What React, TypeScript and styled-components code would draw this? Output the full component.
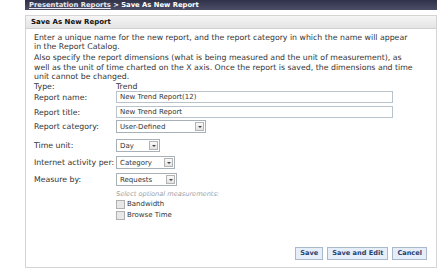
import React from 'react';
import styled, { createGlobalStyle } from 'styled-components';

const GlobalStyle = createGlobalStyle`
  html, body {
    margin: 0;
    padding: 0;
    background: #ffffff;
    font-family: "DejaVu Sans", Verdana, sans-serif;
  }
`;

const Page = styled.div`
  width: 444px;
  height: 279px;
  padding-left: 25px;
  padding-right: 7px;
  box-sizing: border-box;
  display: flex;
  flex-direction: column;
`;

const Crumbs = styled.div`
  height: 10px;
  background: linear-gradient(#2f3248, #4b4e66);
  color: #ffffff;
  font-size: 6.8px;
  font-weight: bold;
  line-height: 10px;
  padding-left: 4px;
  white-space: nowrap;
  overflow: hidden;
`;

const CrumbLink = styled.span`
  text-decoration: underline;
  color: #e8e8f0;
`;

const Panel = styled.div`
  margin-top: 5px;
  border: 1px solid #d4d4d4;
  height: 253px;
  box-sizing: border-box;
  display: flex;
  flex-direction: column;
`;

const PanelTitle = styled.div`
  height: 12px;
  line-height: 12px;
  padding-left: 5px;
  background: linear-gradient(#f5f5f5, #e4e4e4);
  border-bottom: 1px solid #d0d0d0;
  font-size: 7px;
  font-weight: bold;
  color: #111;
`;

const Body = styled.div`
  padding: 4px 9px 0 8px;
  font-size: 7.8px;
  color: #333;
  display: flex;
  flex-direction: column;
  flex: 1;
`;

const Para = styled.p`
  margin: 0;
  line-height: 9.2px;
  white-space: nowrap;
  & + & {
    margin-top: 2px;
  }
`;

const Form = styled.div`
  margin-top: 1px;
  display: flex;
  flex-direction: column;
`;

const Row = styled.div<{ $h: number; $mt?: number }>`
  display: flex;
  align-items: center;
  height: ${p => p.$h}px;
  margin-top: ${p => p.$mt ?? 0}px;
`;

const Label = styled.div`
  width: 82px;
  flex: none;
  white-space: nowrap;
  color: #333;
`;

const TextInput = styled.div`
  width: 277px;
  height: 12px;
  box-sizing: border-box;
  border: 1px solid #b8c3cc;
  padding-left: 3px;
  line-height: 10px;
  font-size: 7px;
`;

const Select = styled.div<{ $w: number }>`
  width: ${p => p.$w}px;
  height: 13px;
  box-sizing: border-box;
  border: 1px solid #a8b0b8;
  display: flex;
  align-items: center;
  justify-content: space-between;
  padding-left: 3px;
  font-size: 7px;
`;

const Arrow = styled.span`
  width: 9px;
  height: 9px;
  margin-right: 1px;
  box-sizing: border-box;
  border: 1px solid #b4b4b4;
  background: linear-gradient(#fafafa, #e2e2e2);
  display: flex;
  align-items: center;
  justify-content: center;
  &::after {
    content: '';
    border-left: 2px solid transparent;
    border-right: 2px solid transparent;
    border-top: 2px solid #444;
  }
`;

const Hint = styled.div`
  font-style: italic;
  font-size: 6.6px;
  color: #a0a0a0;
`;

const CheckLabel = styled.label`
  display: flex;
  align-items: center;
  gap: 2px;
  font-size: 7px;
  color: #333;
`;

const Box = styled.span`
  width: 7px;
  height: 7px;
  border: 1px solid #b0b0b0;
  background: #e8e8e8;
`;

const Buttons = styled.div`
  margin-top: auto;
  margin-bottom: 7px;
  display: flex;
  justify-content: flex-end;
  gap: 4px;
`;

const Button = styled.button`
  height: 13px;
  padding: 0 4px;
  border: 1px solid #aab8cc;
  background: #e6eefa;
  color: #29436e;
  font-family: "DejaVu Sans", Verdana, sans-serif;
  font-size: 6.6px;
  font-weight: bold;
  line-height: 11px;
`;

const SelectField = ({ text, w }: { text: string; w: number }) => (
  <Select $w={w}>
    <span>{text}</span>
    <Arrow />
  </Select>
);

export default function App() {
  return (
    <>
      <GlobalStyle />
      <Page>
        <Crumbs>
          <CrumbLink>Presentation Reports</CrumbLink> &gt; Save As New Report
        </Crumbs>
        <Panel>
          <PanelTitle>Save As New Report</PanelTitle>
          <Body>
            <Para>
              Enter a unique name for the new report, and the report category in which the name will appear
              <br />
              in the Report Catalog.
            </Para>
            <Para>
              Also specify the report dimensions (what is being measured and the unit of measurement), as
              <br />
              well as the unit of time charted on the X axis. Once the report is saved, the dimensions and time
              <br />
              unit cannot be changed.
            </Para>
            <Form>
              <Row $h={9}>
                <Label>Type:</Label>
                <span>Trend</span>
              </Row>
              <Row $h={12}>
                <Label>Report name:</Label>
                <TextInput>New Trend Report(12)</TextInput>
              </Row>
              <Row $h={12} $mt={3}>
                <Label>Report title:</Label>
                <TextInput>New Trend Report</TextInput>
              </Row>
              <Row $h={13} $mt={2}>
                <Label>Report category:</Label>
                <SelectField text="User-Defined" w={90} />
              </Row>
              <Row $h={13} $mt={6}>
                <Label>Time unit:</Label>
                <SelectField text="Day" w={44} />
              </Row>
              <Row $h={13} $mt={4}>
                <Label>Internet activity per:</Label>
                <SelectField text="Category" w={59} />
              </Row>
              <Row $h={13} $mt={4}>
                <Label>Measure by:</Label>
                <SelectField text="Requests" w={61} />
              </Row>
              <Row $h={10} $mt={3}>
                <Label />
                <Hint>Select optional measurements:</Hint>
              </Row>
              <Row $h={10}>
                <Label />
                <CheckLabel><Box />Bandwidth</CheckLabel>
              </Row>
              <Row $h={10} $mt={1}>
                <Label />
                <CheckLabel><Box />Browse Time</CheckLabel>
              </Row>
            </Form>
            <Buttons>
              <Button>Save</Button>
              <Button>Save and Edit</Button>
              <Button>Cancel</Button>
            </Buttons>
          </Body>
        </Panel>
      </Page>
    </>
  );
}
